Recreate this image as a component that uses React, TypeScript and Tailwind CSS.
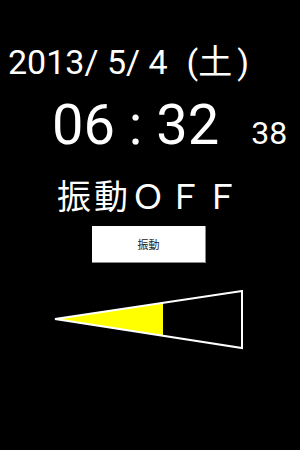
import React from "react";

const latin = { fontFamily: 'Roboto, "Noto Sans CJK JP", sans-serif' };
const cjk = { fontFamily: '"Noto Sans CJK JP", sans-serif' };

export default function App() {
  return (
    <div className="w-[300px] h-[450px] bg-black text-white overflow-hidden flex flex-col" style={latin}>
      <div className="mt-[43px] ml-[8px] text-[34px] leading-none whitespace-pre">
        2013/ 5/ 4<span className="ml-[19px]">(</span><span style={cjk}>土</span><span className="ml-[5px]">)</span>
      </div>
      <div className="mt-[18px] flex items-baseline whitespace-pre">
        <span className="ml-[52px] text-[56px] leading-none">06 : 32</span>
        <span className="ml-[32px] text-[32px] leading-none">38</span>
      </div>
      <div className="mt-[25px] ml-[57px] text-[34px] leading-none tracking-[3px] whitespace-pre" style={cjk}>
        振動ＯＦＦ
      </div>
      <div className="mt-[14px] ml-[92px] w-[114px] h-[37px] bg-white border-b border-r border-[#888] flex items-center justify-center text-[11px] text-[#222]" style={cjk}>
        振動
      </div>
      <svg className="mt-[27px] shrink-0" width="300" height="60" viewBox="0 290 300 60">
        <polygon points="55,319 163,302.8 163,335.7" fill="#ffff00" />
        <polygon points="55,319 242,291 242,348" fill="none" stroke="#ffffff" strokeWidth="2" />
      </svg>
    </div>
  );
}
